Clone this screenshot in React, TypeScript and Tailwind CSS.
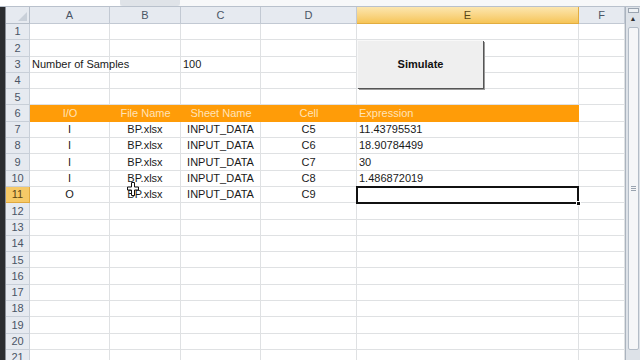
import React from 'react';

const cols = [
  { key: 'A', w: 'w-[80px]' },
  { key: 'B', w: 'w-[71px]' },
  { key: 'C', w: 'w-[80px]' },
  { key: 'D', w: 'w-[96px]' },
  { key: 'E', w: 'w-[222px]' },
  { key: 'F', w: 'w-[46px]' },
];

type Cell = { text?: string; align?: 'left' | 'center' };

const dataRows: Record<number, Cell[]> = {
  3: [{ text: 'Number of Samples' }, {}, { text: '100' }, {}, {}, {}],
  7: [{ text: 'I', align: 'center' }, { text: 'BP.xlsx', align: 'center' }, { text: 'INPUT_DATA', align: 'center' }, { text: 'C5', align: 'center' }, { text: '11.43795531' }, {}],
  8: [{ text: 'I', align: 'center' }, { text: 'BP.xlsx', align: 'center' }, { text: 'INPUT_DATA', align: 'center' }, { text: 'C6', align: 'center' }, { text: '18.90784499' }, {}],
  9: [{ text: 'I', align: 'center' }, { text: 'BP.xlsx', align: 'center' }, { text: 'INPUT_DATA', align: 'center' }, { text: 'C7', align: 'center' }, { text: '30' }, {}],
  10: [{ text: 'I', align: 'center' }, { text: 'BP.xlsx', align: 'center' }, { text: 'INPUT_DATA', align: 'center' }, { text: 'C8', align: 'center' }, { text: '1.486872019' }, {}],
  11: [{ text: 'O', align: 'center' }, { text: 'BP.xlsx', align: 'center' }, { text: 'INPUT_DATA', align: 'center' }, { text: 'C9', align: 'center' }, {}, {}],
};

const headerRow = ['I/O', 'File Name', 'Sheet Name', 'Cell', 'Expression'];

function RowNum({ n }: { n: number }) {
  const active = n === 11;
  return (
    <div
      className={`w-[24px] h-[16.3px] shrink-0 flex items-center justify-center border-b border-r text-[11px] ${
        active
          ? 'bg-[#f6c967] border-[#e0a93e] text-[#5a4413]'
          : 'bg-[#e6eaf0] border-[#c8cfd8] text-[#4a5565]'
      }`}
    >
      {n}
    </div>
  );
}

function SheetRow({ n }: { n: number }) {
  if (n === 6) {
    return (
      <div className="flex">
        <RowNum n={n} />
        {headerRow.map((h, i) => (
          <div
            key={i}
            className={`${cols[i].w} h-[16.3px] shrink-0 bg-[#ff9c08] text-[#ffe3b8] text-[11px] flex items-center ${
              i === 4 ? 'pl-[2px]' : 'justify-center'
            }`}
          >
            {h}
          </div>
        ))}
        <div className="w-[46px] h-[16.3px] shrink-0 border-b border-r border-[#dfe1e3]" />
      </div>
    );
  }
  const cells = dataRows[n] ?? cols.map(() => ({}));
  return (
    <div className="flex">
      <RowNum n={n} />
      {cells.map((c, i) => (
        <div
          key={i}
          className={`${cols[i].w} h-[16.3px] shrink-0 border-b border-r border-[#dfe1e3] text-[11px] text-[#1a1a1a] flex items-center whitespace-nowrap ${
            c.align === 'center' ? 'justify-center' : 'pl-[2px]'
          }`}
        >
          {c.text}
        </div>
      ))}
    </div>
  );
}

export default function App() {
  const rows = Array.from({ length: 21 }, (_, i) => i + 1);

  return (
    <div className="w-[640px] h-[360px] overflow-hidden bg-white flex flex-col font-['Liberation_Sans',Arial,sans-serif]">
      {/* top strip (formula bar remnant) */}
      <div className="h-[7px] shrink-0 flex bg-[#f3f4f6] border-b border-[#b9c1cc]">
        <div className="w-[120px] bg-white" />
        <div className="w-[60px] bg-[#dfe3e8] rounded-b-[3px]" />
        <div className="flex-1 bg-[#f7f8f9]" />
      </div>

      <div className="flex flex-1 min-h-0">
        {/* dark window edge */}
        <div className="w-[6px] shrink-0 bg-[#2b2d30] border-r border-[#8b9098]" />

        {/* sheet */}
        <div className="relative flex-1 min-w-0">
          {/* column headers */}
          <div className="flex h-[17px]">
            <div className="w-[24px] shrink-0 bg-[#e6eaf0] border-b border-r border-[#b6bec9] flex items-end justify-end p-[2px]">
              <div className="w-0 h-0 border-l-[9px] border-l-transparent border-b-[9px] border-b-[#c9d0d9]" />
            </div>
            {cols.map((c) => (
              <div
                key={c.key}
                className={`${c.w} shrink-0 border-b border-r text-[11px] flex items-center justify-center ${
                  c.key === 'E'
                    ? 'bg-gradient-to-b from-[#fce6ae] to-[#f6c556] border-[#e2ad40] text-[#5b4716]'
                    : 'bg-[#e6eaf0] border-[#c2c9d3] text-[#4a5565]'
                }`}
              >
                {c.key}
              </div>
            ))}
          </div>

          {rows.map((n) => (
            <SheetRow key={n} n={n} />
          ))}

          {/* Simulate button */}
          <div className="absolute left-[351px] top-[33px] w-[126px] h-[48px] bg-[#efefef] border-t border-l border-[#f8f8f8] shadow-[1px_1px_0_#555,2px_2px_0_#9a9a9a] flex items-center justify-center">
            <span className="text-[11px] font-bold text-[#111]">Simulate</span>
          </div>

          {/* selection E11 */}
          <div className="absolute left-[350px] top-[179px] w-[223px] h-[17.5px] border-2 border-[#111]">
            <div className="absolute -right-[4px] -bottom-[4px] w-[5px] h-[5px] bg-[#111] border border-white" />
          </div>

          {/* move cursor */}
          <svg className="absolute left-[121px] top-[175px]" width="12" height="14" viewBox="0 0 12 14">
            <path
              d="M4.5 0.5h3v4.5h4v3h-4v5.5h-3v-5.5h-4v-3h4z"
              fill="#fff"
              stroke="#111"
              strokeWidth="1"
            />
          </svg>
        </div>

        {/* vertical scrollbar */}
        <div className="w-[15px] shrink-0 bg-[#dde2e8] border-l border-[#aab3be] flex flex-col items-center">
          <div className="w-[11px] h-[5px] mt-[1px] border border-[#9aa4b0] bg-[#eef1f4]" />
          <div className="h-[12px] flex items-center justify-center text-[7px] text-[#333]">▲</div>
          <div className="w-[11px] flex-1 mt-[2px] mb-[10px] bg-[#f5f6f8] border border-[#b3bcc7] rounded-[2px] flex items-center justify-center">
            <div className="flex flex-col gap-[1px]">
              <div className="w-[5px] h-px bg-[#9aa4b0]" />
              <div className="w-[5px] h-px bg-[#9aa4b0]" />
              <div className="w-[5px] h-px bg-[#9aa4b0]" />
            </div>
          </div>
        </div>
      </div>
    </div>
  );
}
